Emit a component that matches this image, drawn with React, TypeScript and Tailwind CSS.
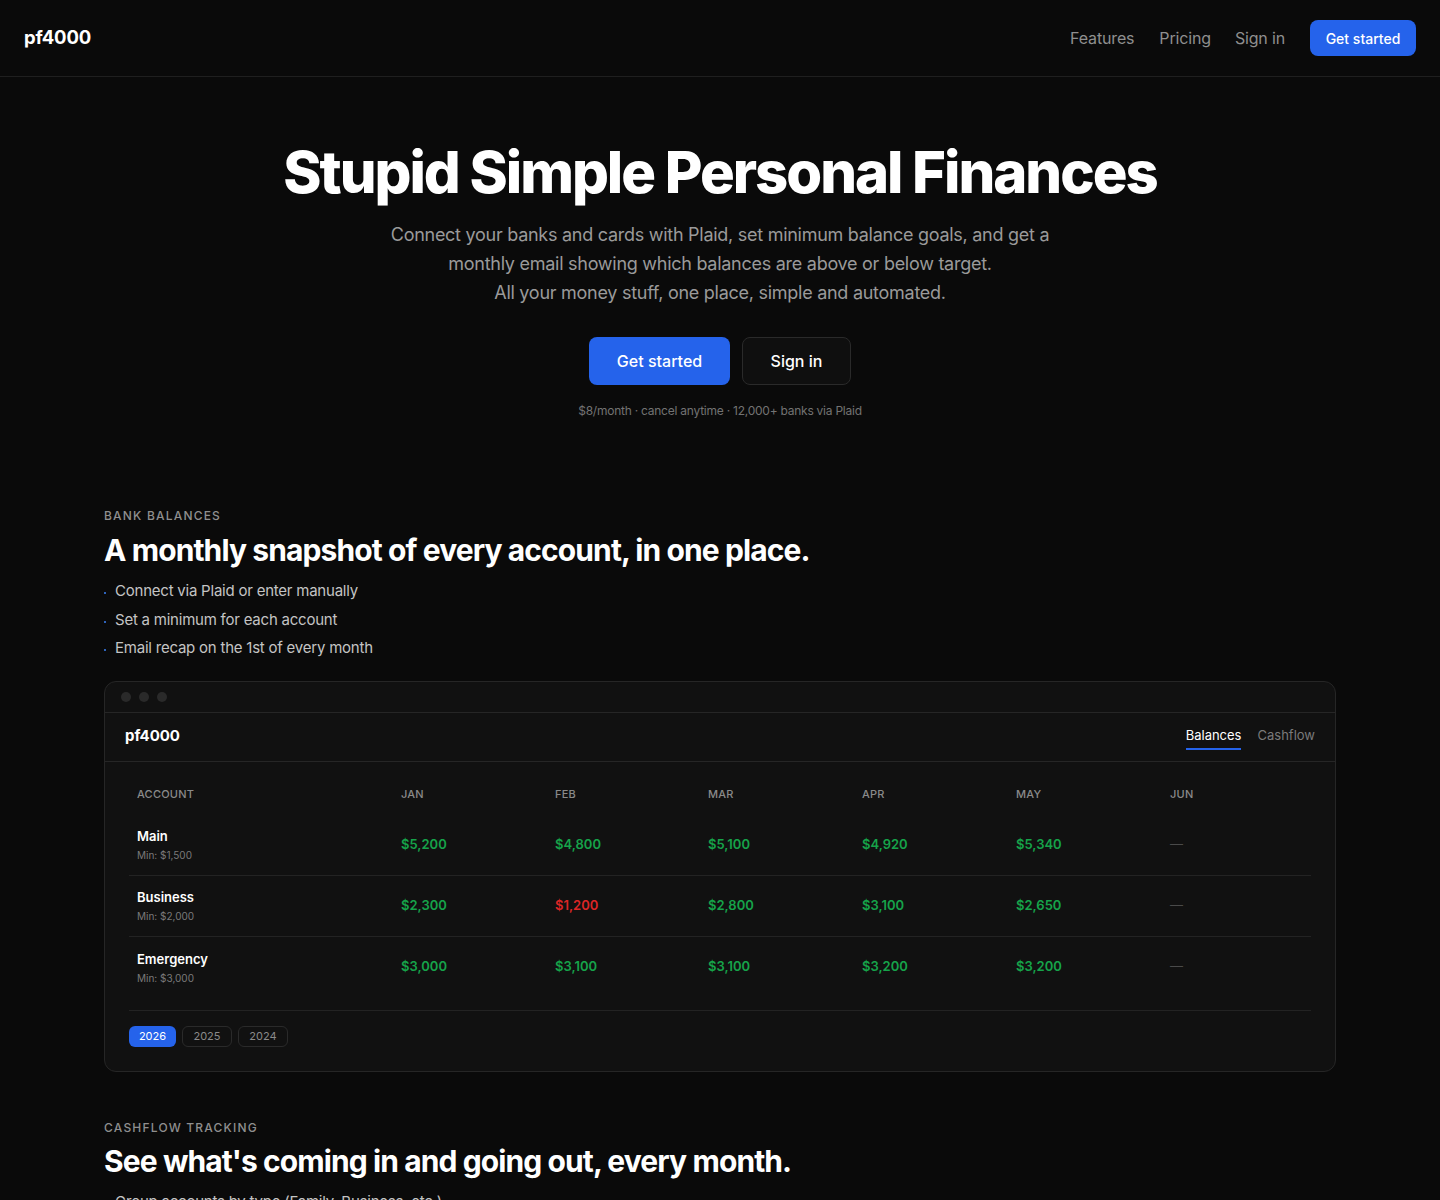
import React from "react";

const months = ["JAN", "FEB", "MAR", "APR", "MAY", "JUN"];
const rows = [
  { name: "Main", min: "Min: $1,500", vals: ["$5,200", "$4,800", "$5,100", "$4,920", "$5,340"], bad: [] as number[] },
  { name: "Business", min: "Min: $2,000", vals: ["$2,300", "$1,200", "$2,800", "$3,100", "$2,650"], bad: [1] },
  { name: "Emergency", min: "Min: $3,000", vals: ["$3,000", "$3,100", "$3,100", "$3,200", "$3,200"], bad: [] as number[] },
];

const cols = "grid grid-cols-[264px_154px_153px_154px_154px_154px_1fr]";

function Bullet({ children }: { children: React.ReactNode }) {
  return (
    <li className="flex items-center h-[28.5px]">
      <span className="w-[2px] h-[2px] rounded-full bg-[#3b82f6] mr-[9px] mt-[4px]" />
      <span>{children}</span>
    </li>
  );
}

export default function App() {
  return (
    <div className="min-h-[1200px] bg-[#0a0a0a] text-white" style={{ fontFamily: "Inter, 'Noto Sans', sans-serif" }}>
      <header className="h-[77px] border-b border-[#1f1f1f] flex items-center justify-between px-6">
        <div className="text-[18.5px] font-bold tracking-[-0.005em]">pf4000</div>
        <nav className="flex items-center">
          <a className="text-[16px] text-[#8f8f8f] mr-[25px] tracking-[-0.01em]">Features</a>
          <a className="text-[16px] text-[#8f8f8f] mr-[24px] tracking-[-0.01em]">Pricing</a>
          <a className="text-[16px] text-[#8f8f8f] mr-[25px] tracking-[-0.01em]">Sign in</a>
          <button className="h-9 w-[106px] rounded-lg bg-[#2563eb] text-[14px] font-medium text-white">Get started</button>
        </nav>
      </header>

      <section className="flex flex-col items-center pt-[60px]">
        <h1 className="text-[58px] leading-[70px] font-extrabold tracking-[-0.035em]">Stupid Simple Personal Finances</h1>
        <p className="mt-[13px] text-[18px] leading-[29px] text-[#9a9a9a] text-center w-[680px] tracking-[-0.015em]">
          Connect your banks and cards with Plaid, set minimum balance goals, and get a monthly email showing which balances are above or below target.
          <br />
          All your money stuff, one place, simple and automated.
        </p>
        <div className="mt-[30px] flex gap-3">
          <button className="h-12 w-[141px] rounded-lg bg-[#2563eb] text-[16px] font-medium text-white">Get started</button>
          <button className="h-12 w-[109px] rounded-lg border border-[#2a2a2a] bg-[#0f0f0f] text-[16px] font-medium text-white">Sign in</button>
        </div>
        <p className="mt-[17px] text-[12px] text-[#737373] tracking-[-0.02em]">$8/month · cancel anytime · 12,000+ banks via Plaid</p>
      </section>

      <section className="px-[104px] pt-[87px]">
        <div className="text-[12px] font-medium tracking-[0.1em] text-[#8f8f8f]">BANK BALANCES</div>
        <h2 className="mt-[6px] text-[30px] leading-[38px] font-bold tracking-[-0.03em]">A monthly snapshot of every account, in one place.</h2>
        <ul className="mt-[8px] text-[15px] text-[#c4c4c4] tracking-[-0.015em]">
          <Bullet>Connect via Plaid or enter manually</Bullet>
          <Bullet>Set a minimum for each account</Bullet>
          <Bullet>Email recap on the 1st of every month</Bullet>
        </ul>

        <div className="mt-[18px] rounded-xl border border-[#262626] bg-[#111111] overflow-hidden">
          <div className="h-[31px] flex items-center gap-2 px-4 border-b border-[#262626]">
            <span className="w-[10px] h-[10px] rounded-full bg-[#2a2a2a]" />
            <span className="w-[10px] h-[10px] rounded-full bg-[#2a2a2a]" />
            <span className="w-[10px] h-[10px] rounded-full bg-[#2a2a2a]" />
          </div>
          <div className="h-[49px] flex items-center justify-between px-5 border-b border-[#262626]">
            <div className="text-[15px] font-bold">pf4000</div>
            <div className="flex gap-4 text-[13px] h-full">
              <div className="relative flex items-center text-white pb-[2px]">
                Balances
                <span className="absolute left-0 right-0 bottom-[11px] h-[2px] bg-[#2563eb]" />
              </div>
              <div className="flex items-center text-[#7a7a7a] pb-[2px]">Cashflow</div>
            </div>
          </div>
          <div className="px-6">
            <div className={cols + " h-[53px] items-end pb-[12px] text-[11px] font-medium text-[#8a8a8a] tracking-[0.02em]"}>
              <div className="pl-[8px]">ACCOUNT</div>
              {months.map((m) => (
                <div key={m} className="pl-[8px]">{m}</div>
              ))}
            </div>
            {rows.map((r, i) => (
              <div
                key={r.name}
                className={cols + " items-center h-[61px] " + (i < rows.length - 1 ? "border-b border-[#232323]" : "")}
              >
                <div className="pl-[8px]">
                  <div className="text-[13px] font-semibold text-white leading-[18px]">{r.name}</div>
                  <div className="text-[10px] text-[#7a7a7a] leading-[14px] mt-[3px]">{r.min}</div>
                </div>
                {r.vals.map((v, j) => (
                  <div key={j} className={"pl-[8px] text-[13px] font-semibold " + (r.bad.includes(j) ? "text-[#dc2626]" : "text-[#16a34a]")}>
                    {v}
                  </div>
                ))}
                <div className="pl-[8px] text-[13px] text-[#4a4a4a]">—</div>
              </div>
            ))}
            <div className="mt-[12px] border-t border-[#232323] pt-[15px] pb-[24px] flex gap-[6px]">
              <button className="h-[21px] w-[47px] rounded-md bg-[#2563eb] text-[11px] text-white">2026</button>
              <button className="h-[21px] w-[50px] rounded-md border border-[#2a2a2a] text-[11px] text-[#8a8a8a]">2025</button>
              <button className="h-[21px] w-[50px] rounded-md border border-[#2a2a2a] text-[11px] text-[#8a8a8a]">2024</button>
            </div>
          </div>
        </div>
      </section>

      <section className="px-[104px] pt-[47px] pb-10">
        <div className="text-[12px] font-medium tracking-[0.1em] text-[#8f8f8f]">CASHFLOW TRACKING</div>
        <h2 className="mt-[5px] text-[30px] leading-[38px] font-bold tracking-[-0.03em]">See what's coming in and going out, every month.</h2>
        <ul className="mt-[8px] text-[15px] text-[#c4c4c4] tracking-[-0.015em]">
          <Bullet>Group accounts by type (Family, Business, etc.)</Bullet>
          <Bullet>Track income and expenses per month</Bullet>
          <Bullet>See net cashflow at a glance</Bullet>
        </ul>
      </section>
    </div>
  );
}
